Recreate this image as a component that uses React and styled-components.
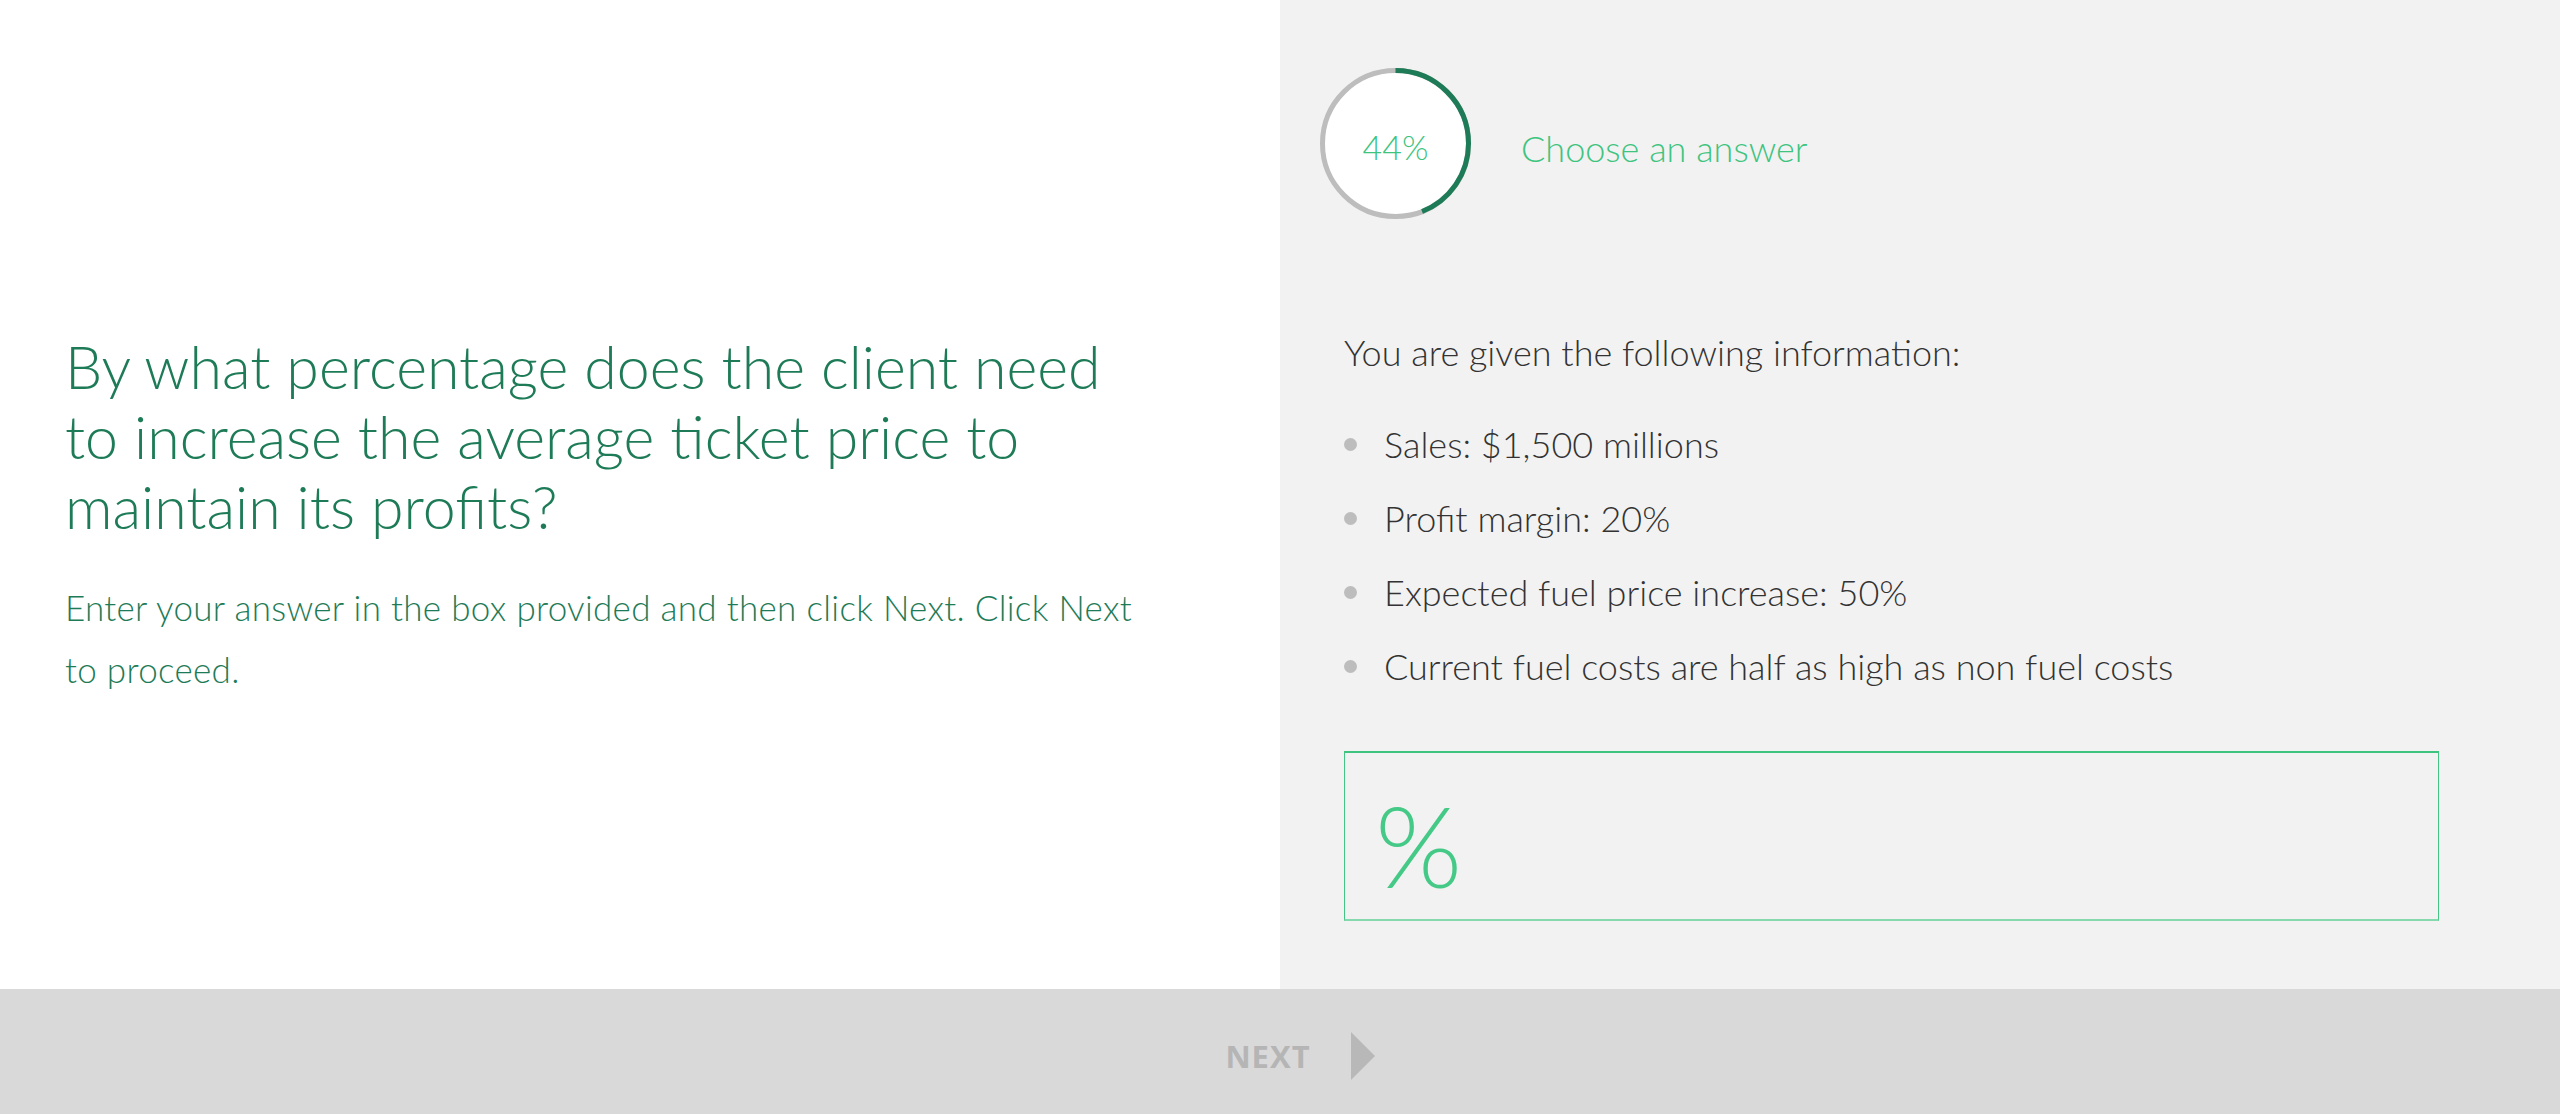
import React from "react";
import styled, { createGlobalStyle } from "styled-components";

const GlobalStyle = createGlobalStyle`
    html, body {
        margin: 0;
        padding: 0;
        background: #ffffff;
        font-family: Lato, "Open Sans", sans-serif;
    }
`

const Page = styled.div`
    width: 2560px;
    height: 1114px;
    display: flex;
    flex-direction: column;
    overflow: hidden;
`

const Main = styled.div`
    flex: 1;
    display: flex;
`

const QuestionPanel = styled.div`
    width: 1280px;
    background: #ffffff;
    display: flex;
    flex-direction: column;
    justify-content: center;
    padding: 42px 0 0 65px;
    box-sizing: border-box;
`

const Question = styled.h1`
    margin: 0;
    max-width: 1070px;
    font-family: Lato, sans-serif;
    font-weight: 300;
    font-size: 59px;
    line-height: 70px;
    color: #1e7b57;
`

const Instructions = styled.p`
    margin: 34px 0 0;
    max-width: 1085px;
    font-family: Lato, sans-serif;
    font-weight: 300;
    font-size: 35px;
    letter-spacing: 0.3px;
    line-height: 62px;
    color: #1e7b57;
`

const InfoPanel = styled.div`
    flex: 1;
    background: #f2f2f2;
    padding: 68px 121px 0 64px;
    box-sizing: border-box;
    display: flex;
    flex-direction: column;
`

const ProgressRow = styled.div`
    display: flex;
    align-items: center;
    gap: 50px;
    margin-left: -24px;
`

const Ring = styled.div`
    position: relative;
    width: 151px;
    height: 151px;
`

const RingLabel = styled.span`
    position: absolute;
    inset: 0;
    padding-top: 6px;
    display: flex;
    align-items: center;
    justify-content: center;
    font-family: Lato, sans-serif;
    font-weight: 300;
    font-size: 34px;
    color: #3ec47f;
`

const Prompt = styled.span`
    margin-top: 8px;
    font-family: Lato, sans-serif;
    font-weight: 300;
    font-size: 36px;
    color: #3ec47f;
`

const Intro = styled.p`
    margin: 111px 0 0;
    font-family: Lato, sans-serif;
    font-weight: 300;
    font-size: 36px;
    line-height: 44px;
    color: #333333;
`

const FactList = styled.ul`
    list-style: none;
    margin: 48px 0 0;
    padding: 0;
    display: flex;
    flex-direction: column;
    gap: 30px;
`

const Fact = styled.li`
    display: flex;
    align-items: center;
    gap: 27px;
    font-family: Lato, sans-serif;
    font-weight: 300;
    font-size: 36px;
    line-height: 44px;
    color: #333333;

    &::before {
        content: "";
        width: 13px;
        height: 13px;
        border-radius: 50%;
        background: #bdbdbd;
        flex-shrink: 0;
    }
`

const AnswerBox = styled.label`
    margin-top: 63px;
    height: 170px;
    box-sizing: border-box;
    border: 1px solid #45c585;
    border-top: 2px solid #3ec47f;
    border-bottom: 2px solid #86d9ae;
    display: flex;
    align-items: center;
    padding-left: 30px;
`

const Percent = styled.span`
    font-family: Lato, sans-serif;
    font-weight: 300;
    font-size: 112px;
    color: #45c987;
    margin-top: 16px;
`

const Footer = styled.div`
    height: 125px;
    background: #d9d9d9;
    display: flex;
    align-items: center;
    justify-content: center;
    padding: 8px 0 0 40px;
    box-sizing: border-box;
`

const NextButton = styled.button`
    border: none;
    background: none;
    padding: 0;
    display: flex;
    align-items: center;
    gap: 40px;
    font-family: "Open Sans", sans-serif;
    font-weight: 700;
    font-size: 31px;
    letter-spacing: 1px;
    color: #b5b5b5;
    cursor: default;
`

const Arrow = styled.span`
    width: 0;
    height: 0;
    border-top: 24px solid transparent;
    border-bottom: 24px solid transparent;
    border-left: 24px solid #b8b8b8;
`

const facts = [
    "Sales: $1,500 millions",
    "Profit margin: 20%",
    "Expected fuel price increase: 50%",
    "Current fuel costs are half as high as non fuel costs",
];

const ProgressRing = ({ percent }) => {
    const r = 73;
    const c = 2 * Math.PI * r;
    return (
        <Ring>
            <svg width="151" height="151" viewBox="0 0 151 151">
                <circle cx="75.5" cy="75.5" r={r} fill="#ffffff" stroke="#bdbdbd" strokeWidth="5" />
                <circle
                    cx="75.5"
                    cy="75.5"
                    r={r}
                    fill="none"
                    stroke="#1e7b57"
                    strokeWidth="5"
                    strokeDasharray={`${(c * percent) / 100} ${c}`}
                    transform="rotate(-90 75.5 75.5)"
                />
            </svg>
            <RingLabel>{percent}%</RingLabel>
        </Ring>
    );
};

const App = () => {
    return (
        <Page>
            <GlobalStyle />
            <Main>
                <QuestionPanel>
                    <Question>
                        By what percentage does the client need to increase the average ticket price to maintain its profits?
                    </Question>
                    <Instructions>
                        Enter your answer in the box provided and then click Next. Click Next to proceed.
                    </Instructions>
                </QuestionPanel>
                <InfoPanel>
                    <ProgressRow>
                        <ProgressRing percent={44} />
                        <Prompt>Choose an answer</Prompt>
                    </ProgressRow>
                    <Intro>You are given the following information:</Intro>
                    <FactList>
                        {facts.map(f => (
                            <Fact key={f}>{f}</Fact>
                        ))}
                    </FactList>
                    <AnswerBox>
                        <Percent>%</Percent>
                    </AnswerBox>
                </InfoPanel>
            </Main>
            <Footer>
                <NextButton>
                    NEXT
                    <Arrow />
                </NextButton>
            </Footer>
        </Page>
    );
};

export default App;
